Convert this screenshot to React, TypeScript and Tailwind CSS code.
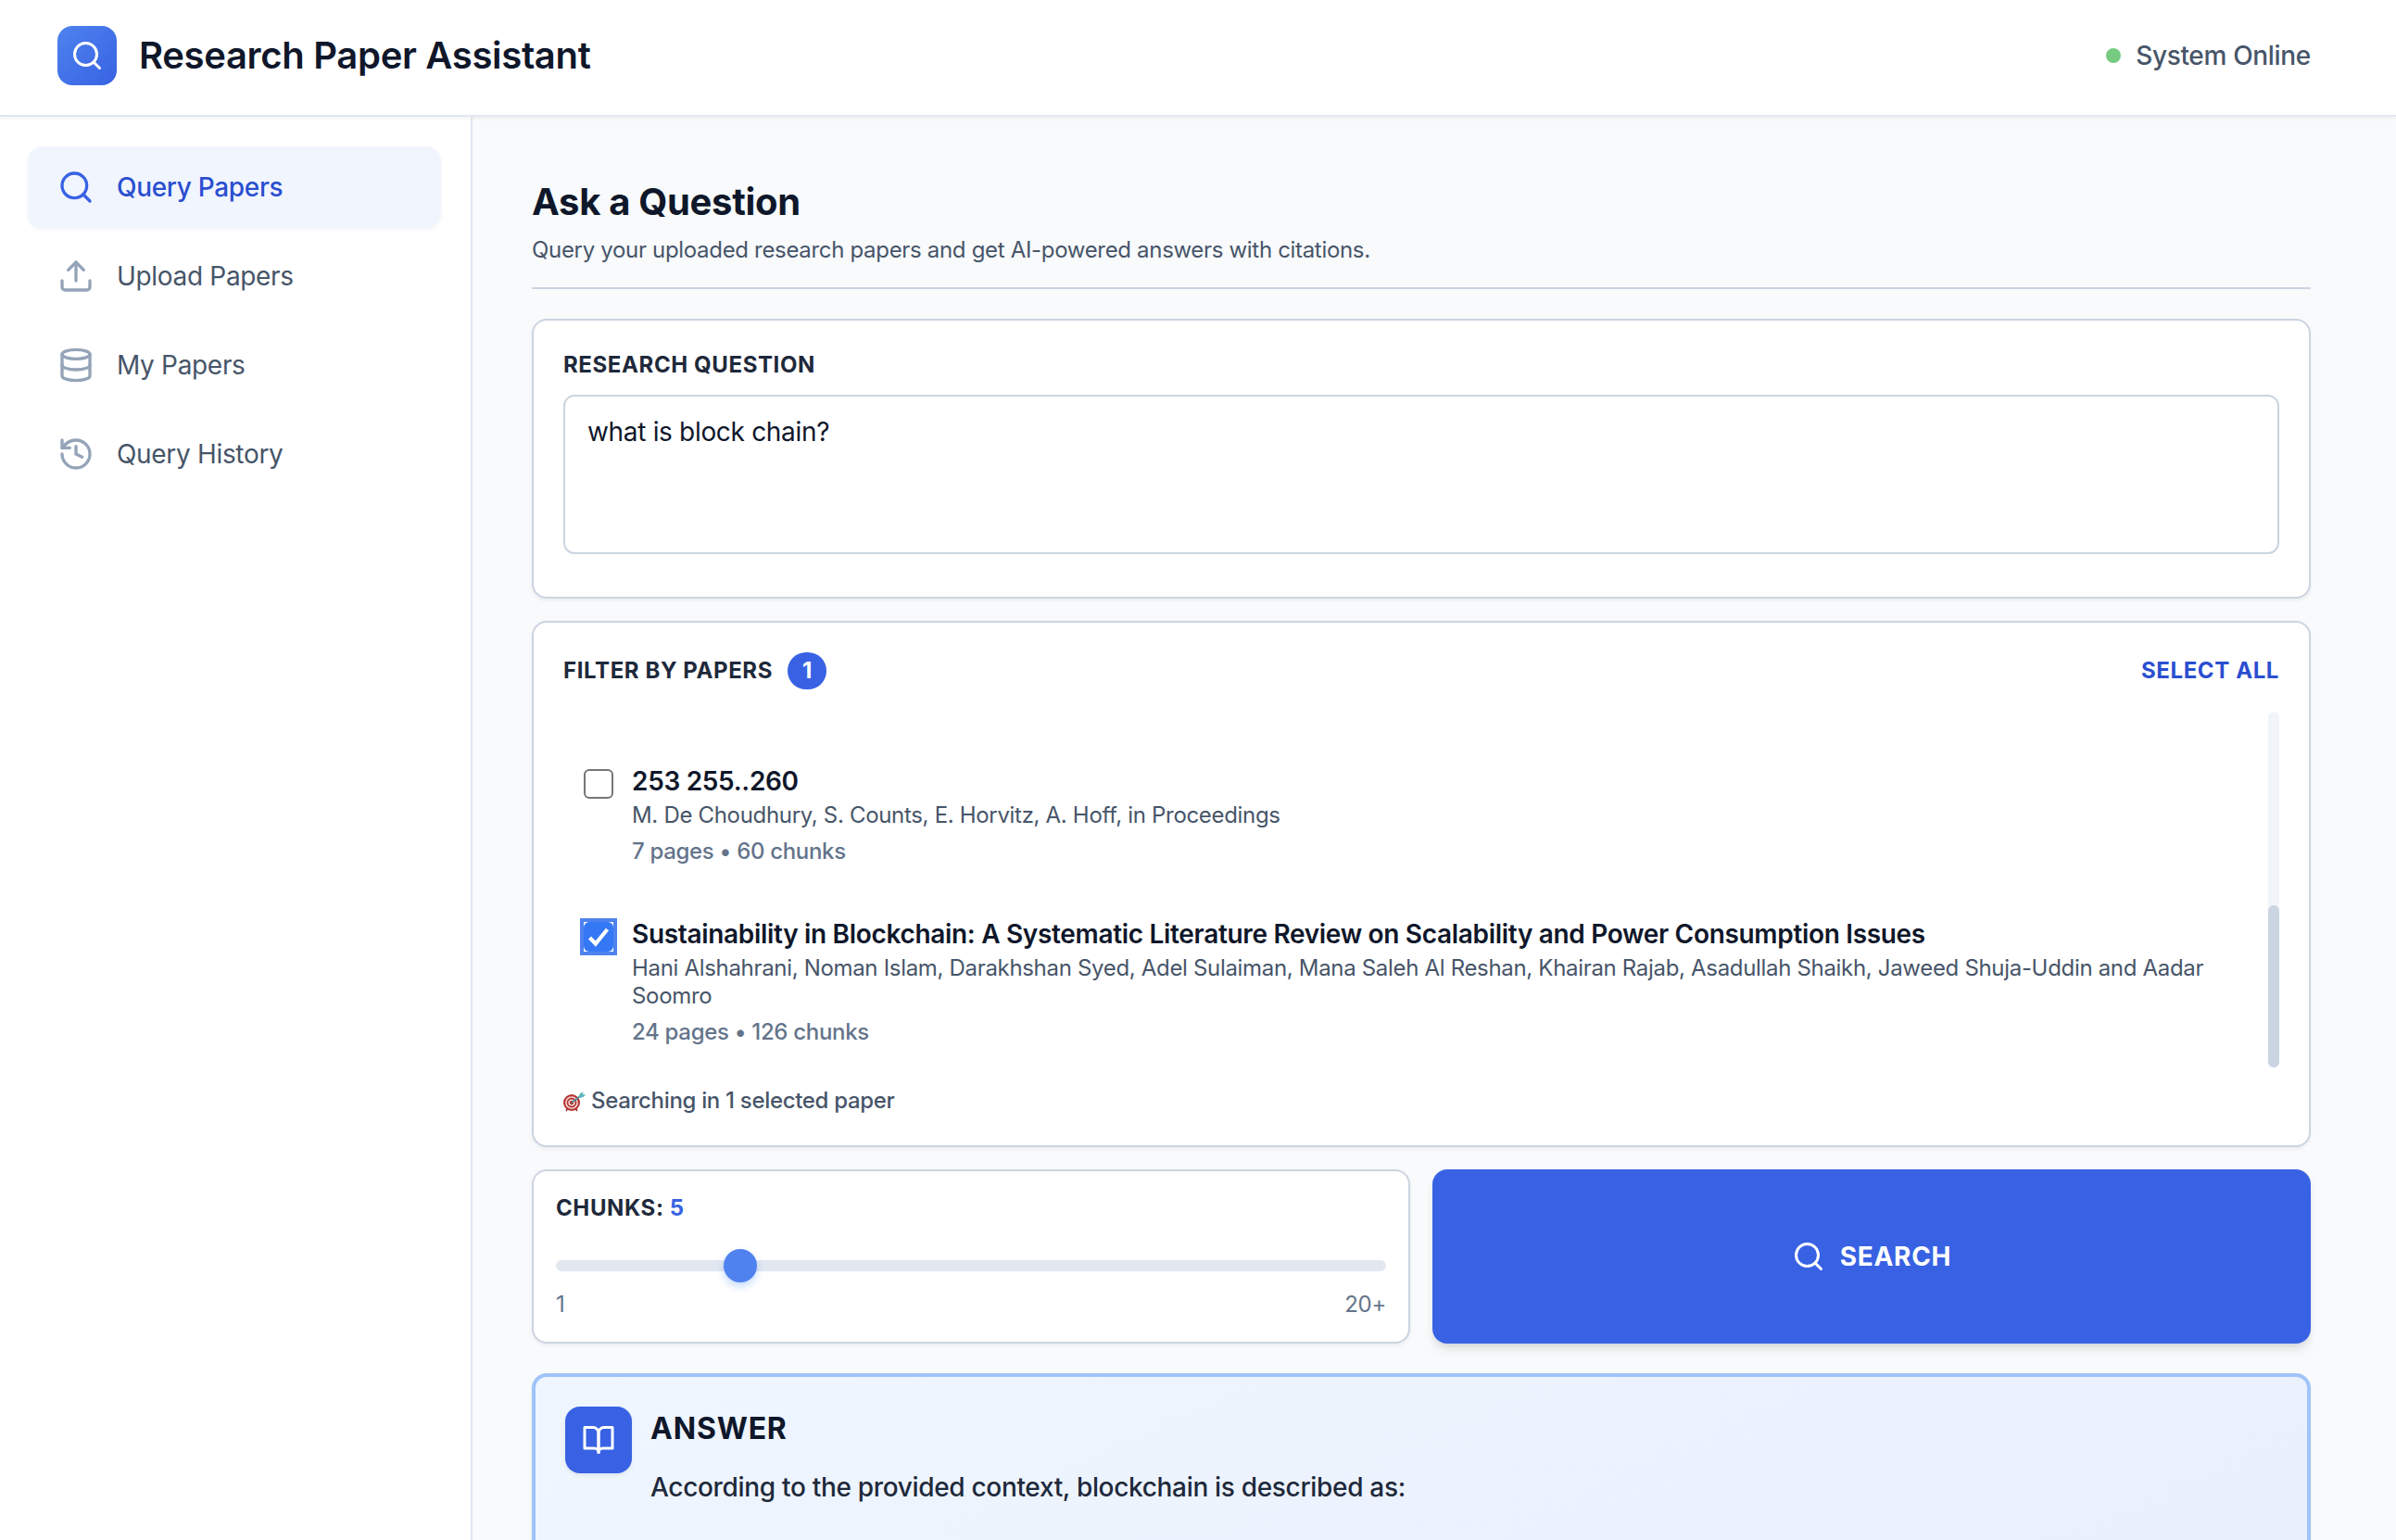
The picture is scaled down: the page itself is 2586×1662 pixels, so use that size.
import { useState } from "react";
import { Database, History, Search, Upload } from "lucide-react";
import { FiBookOpen } from "react-icons/fi";

const navItems = [
  { name: "Query Papers", icon: Search },
  { name: "Upload Papers", icon: Upload },
  { name: "My Papers", icon: Database },
  { name: "Query History", icon: History },
];

const papers = [
  {
    id: "choudhury",
    title: "253 255..260",
    authors: "M. De Choudhury, S. Counts, E. Horvitz, A. Hoff, in Proceedings",
    pages: 7,
    chunks: 60,
  },
  {
    id: "alshahrani",
    title: "Sustainability in Blockchain: A Systematic Literature Review on Scalability and Power Consumption Issues",
    authors:
      "Hani Alshahrani, Noman Islam, Darakhshan Syed, Adel Sulaiman, Mana Saleh Al Reshan, Khairan Rajab, Asadullah Shaikh, Jaweed Shuja-Uddin and Aadar Soomro",
    pages: 24,
    chunks: 126,
  },
];

function TargetIcon() {
  return (
    <svg viewBox="0 0 24 24" className="size-6 shrink-0" aria-hidden="true">
      <path d="M5 20l-2 3M13 20l2 3" stroke="#8f2a28" strokeWidth="1.4" />
      <circle cx="9" cy="14" r="9" fill="#b93632" />
      <circle cx="9" cy="14" r="6.8" fill="#f3e6e4" />
      <circle cx="9" cy="14" r="5.4" fill="#b93632" />
      <circle cx="9" cy="14" r="3.6" fill="#f3e6e4" />
      <circle cx="9" cy="14" r="2.2" fill="#b93632" />
      <path d="M9 14L19 6.5" stroke="#4b8f96" strokeWidth="1.6" />
      <path d="M16.5 7.5L18 4l3.5-1.5L21 5l3 .5-2.5 2.5-4 1z" fill="#5fb6bd" />
    </svg>
  );
}

function Header() {
  return (
    <header className="relative z-10 flex items-center justify-between border-b-2 border-[#e2e8f0] bg-white pt-7 pr-[92px] pb-8 pl-[62px] shadow-[0_2px_4px_rgba(0,0,0,0.05)]">
      <div className="flex items-center gap-6">
        <div className="flex size-16 items-center justify-center rounded-2xl bg-linear-to-br from-[#4f82ee] to-[#3862e3]">
          <Search className="size-9 text-white" />
        </div>
        <span className="text-[40px] leading-[56px] font-semibold text-[#0f172a]">Research Paper Assistant</span>
      </div>
      <div className="flex items-center gap-4 text-[28px] leading-10 font-medium text-[#475569]">
        <span className="size-4 rounded-full bg-[#76cb81]" />
        System Online
      </div>
    </header>
  );
}

function Sidebar() {
  return (
    <aside className="w-[510px] shrink-0 border-r-2 border-[#e2e8f0] bg-white pt-8 pr-8 pl-[30px]">
      <nav className="flex flex-col gap-2">
        {navItems.map((item, index) => (
          <button
            key={item.name}
            type="button"
            className={
              index === 0
                ? "flex items-center gap-6 rounded-2xl bg-[#f1f5fe] px-8 py-6 text-[28px] leading-10 font-medium text-[#2a4fd0] shadow-[0_2px_4px_rgba(0,0,0,0.05)]"
                : "flex items-center gap-6 rounded-2xl px-8 py-6 text-[28px] leading-10 text-[#475569]"
            }
          >
            <item.icon className={index === 0 ? "size-10 text-[#3862e3]" : "size-10 text-[#94a3b8]"} />
            {item.name}
          </button>
        ))}
      </nav>
    </aside>
  );
}

export default function App() {
  const [question, setQuestion] = useState("what is block chain?");
  const [selected, setSelected] = useState(["alshahrani"]);
  const [chunks, setChunks] = useState(5);

  const togglePaper = (id: string) =>
    setSelected(selected.includes(id) ? selected.filter((s) => s !== id) : [...selected, id]);

  const card = "rounded-2xl border-2 border-[#cbd5e1] bg-white shadow-[0_2px_4px_rgba(0,0,0,0.06)]";
  const label = "text-[24px] leading-8 font-bold tracking-wide text-[#1e293b] uppercase";

  return (
    <div className="flex h-screen flex-col overflow-hidden bg-[#f8fafc] font-['Inter',sans-serif] text-[32px] tracking-[-0.01em]">
      <Header />
      <div className="flex min-h-0 flex-1">
        <Sidebar />
        <main className="min-w-0 flex-1 overflow-hidden pt-16 pr-[92px] pl-16">
          <div className="mb-8 border-b-2 border-[#cbd5e1] pb-6">
            <h1 className="text-[40px] leading-[56px] font-bold text-[#0f172a]">Ask a Question</h1>
            <p className="mt-2 text-[24px] leading-8 text-[#475569]">
              Query your uploaded research papers and get AI-powered answers with citations.
            </p>
          </div>

          <div className="flex flex-col gap-6">
            <section className={`${card} px-8 pt-8 pb-[46px]`}>
              <label htmlFor="question" className={`${label} mb-4 block`}>
                Research Question
              </label>
              <textarea
                id="question"
                rows={3}
                value={question}
                onChange={(e) => setQuestion(e.target.value)}
                className="block w-full resize-none rounded-xl border-2 border-[#cbd5e1] bg-white px-6 pt-4 pb-5 text-[28px] leading-[44px] text-[#0f172a] outline-none"
              />
            </section>

            <section className={`${card} p-8`}>
              <div className="mb-6 flex items-center justify-between">
                <div className="flex items-center gap-4">
                  <h2 className={label}>Filter by Papers</h2>
                  <span className="rounded-full bg-[#3862e3] px-4 py-1 text-[24px] leading-8 font-bold text-white">
                    {selected.length}
                  </span>
                </div>
                <button
                  type="button"
                  onClick={() => setSelected(papers.map((p) => p.id))}
                  className="text-[24px] leading-8 font-bold tracking-wide text-[#2a4fd0] uppercase"
                >
                  Select All
                </button>
              </div>

              <div className="flex h-96">
                <ul className="flex min-w-0 flex-1 flex-col justify-end gap-3 pr-4">
                  {papers.map((paper) => (
                    <li key={paper.id}>
                      <label className="flex items-start gap-5 p-[22px]">
                        <span className="mt-1 grid size-8 shrink-0 outline-[#4f82ee] has-checked:outline-4">
                          <input
                            type="checkbox"
                            checked={selected.includes(paper.id)}
                            onChange={() => togglePaper(paper.id)}
                            className="peer col-start-1 row-start-1 size-8 appearance-none rounded-md border-2 border-[#767676] checked:border-0 checked:bg-[#3478f6]"
                          />
                          <svg
                            viewBox="0 0 32 32"
                            aria-hidden="true"
                            className="pointer-events-none invisible col-start-1 row-start-1 size-8 peer-checked:visible"
                          >
                            <path d="M6.5 17l6.3 6.5L25.5 8" fill="none" stroke="white" strokeWidth="4.2" />
                          </svg>
                        </span>
                        <span className="flex flex-col">
                          <span className="text-[28px] leading-[35px] font-semibold text-[#0f172a]">{paper.title}</span>
                          <span className="mt-1 text-[24px] leading-[30px] text-[#475569]">{paper.authors}</span>
                          <span className="mt-2 text-[24px] leading-8 font-medium text-[#64748b]">
                            {paper.pages} pages • {paper.chunks} chunks
                          </span>
                        </span>
                      </label>
                    </li>
                  ))}
                </ul>
                {/* scroll track, list is at its end */}
                <div className="flex w-3 flex-col justify-end rounded-full bg-[#f1f5f9]">
                  <div className="h-[175px] rounded-full bg-[#cbd5e1]" />
                </div>
              </div>

              <p className="mt-5 flex items-center gap-1.5 text-[24px] leading-8 font-medium text-[#475569]">
                <TargetIcon />
                Searching in {selected.length} selected paper
              </p>
            </section>

            <div className="grid grid-cols-2 gap-6">
              <section className={`${card} p-6`}>
                <label htmlFor="chunks" className={`${label} block`}>
                  Chunks: <span className="text-[#3862e3]">{chunks}</span>
                </label>
                <input
                  id="chunks"
                  type="range"
                  min={1}
                  max={20}
                  value={chunks}
                  onChange={(e) => setChunks(Number(e.target.value))}
                  className="mt-10 mb-5 block h-3 w-full appearance-none rounded-full bg-[#e2e8f0] [&::-webkit-slider-thumb]:size-9 [&::-webkit-slider-thumb]:appearance-none [&::-webkit-slider-thumb]:rounded-full [&::-webkit-slider-thumb]:bg-[#4f82ee] [&::-webkit-slider-thumb]:shadow-[0_4px_8px_rgba(59,130,246,0.3)]"
                />
                <div className="flex justify-between text-[24px] leading-8 text-[#64748b]">
                  <span>1</span>
                  <span>20+</span>
                </div>
              </section>
              <button
                type="button"
                className="flex items-center justify-center gap-4 rounded-2xl bg-[#3862e3] text-[28px] leading-10 font-bold tracking-wide text-white uppercase shadow-[0_8px_12px_-2px_rgba(0,0,0,0.1),0_4px_8px_-4px_rgba(0,0,0,0.1)]"
              >
                <Search className="size-9" />
                Search
              </button>
            </div>
          </div>

          <section className="mt-8 flex min-h-[900px] items-start gap-5 rounded-2xl border-4 border-[#9fc4f9] bg-linear-to-br from-[#eff6ff] to-[#e6ecfb] p-8 shadow-[0_2px_4px_rgba(0,0,0,0.06)]">
            <div className="flex size-[72px] shrink-0 items-center justify-center rounded-2xl bg-[#3862e3] shadow-[0_2px_4px_rgba(0,0,0,0.08)]">
              <FiBookOpen className="size-9 text-white" />
            </div>
            <div>
              <h2 className="text-[32px] leading-[48px] font-bold tracking-wide text-[#0f172a] uppercase">Answer</h2>
              <p className="mt-4 text-[28px] leading-[46px] font-medium text-[#1e293b]">
                According to the provided context, blockchain is described as:
              </p>
            </div>
          </section>
        </main>
      </div>
    </div>
  );
}
